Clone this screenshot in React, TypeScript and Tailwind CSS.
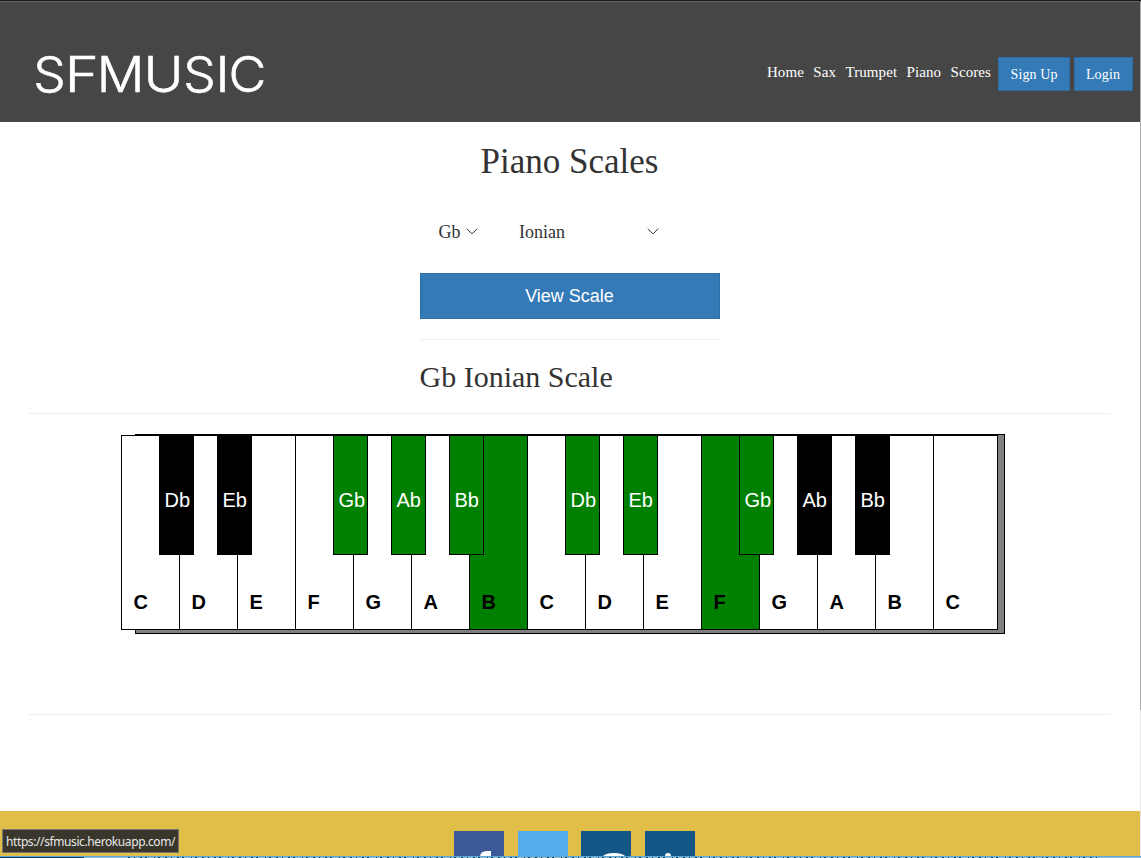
const whiteKeys = ["C", "D", "E", "F", "G", "A", "B", "C", "D", "E", "F", "G", "A", "B", "C"];
const litWhite = [6, 10];
const blackKeys = [
  { at: 0, note: "Db", lit: false },
  { at: 1, note: "Eb", lit: false },
  { at: 3, note: "Gb", lit: true },
  { at: 4, note: "Ab", lit: true },
  { at: 5, note: "Bb", lit: true },
  { at: 7, note: "Db", lit: true },
  { at: 8, note: "Eb", lit: true },
  { at: 10, note: "Gb", lit: true },
  { at: 11, note: "Ab", lit: false },
  { at: 12, note: "Bb", lit: false },
];

const logoLetters = [
  { ch: "S", x: -1.8, sx: 1.05 },
  { ch: "F", x: 29.8, sx: 1.18 },
  { ch: "M", x: 61.8, sx: 1.08 },
  { ch: "U", x: 108.8, sx: 1.1 },
  { ch: "S", x: 148.2, sx: 1.05 },
  { ch: "I", x: 180.6, sx: 1.1 },
  { ch: "C", x: 193.6, sx: 1.06 },
];

function Header() {
  return (
    <header className="flex h-[122px] shrink-0 justify-between border-t border-[#19191c] bg-[#464646] pr-[8px] pl-[35px] text-white shadow-[inset_0_1px_0_#606060]">
      <svg className="mt-[43px] block h-[60px] w-[240px] overflow-visible" aria-label="SFMUSIC">
        <g fill="white" stroke="white" strokeWidth="0.6" fontSize="49" fontWeight="300" fontFamily="Inter, sans-serif">
          {logoLetters.map((l) => (
            <text key={l.x} transform={`translate(${l.x} 47.8) scale(${l.sx} 1)`}>
              {l.ch}
            </text>
          ))}
        </g>
      </svg>
      <nav className="mt-[56px] flex items-start text-[14px] leading-5">
        <div className="mt-[5px] mr-[7px] flex gap-[9.4px] text-[15px] tracking-[0.08px]">
          <a>Home</a>
          <a>Sax</a>
          <a>Trumpet</a>
          <a>Piano</a>
          <a>Scores</a>
        </div>
        <button className="mr-1 h-[34px] w-[72px] border border-[#2e6da4] bg-[#337ab7] pt-px tracking-[0.1px]">Sign Up</button>
        <button className="h-[34px] w-[59px] border border-[#2e6da4] bg-[#337ab7] pt-px pr-px tracking-[0.15px]">Login</button>
      </nav>
    </header>
  );
}

function Chevron() {
  return (
    <svg className="-mt-px h-[7px] w-[12px]" viewBox="0 0 12 7" fill="none" stroke="#333" strokeWidth="1">
      <path d="M.8.7 6 5.9 11.2.7" />
    </svg>
  );
}

function Piano() {
  return (
    <div className="relative mt-5 ml-[121px] h-[200px] w-[884px] font-['Liberation_Sans',sans-serif] text-[20px] leading-7 text-black">
      <div className="absolute inset-y-0 right-0 left-[14px] border border-black bg-[#808080]" />
      <div className="absolute top-px left-0 flex h-[195px] w-[877px] border border-black">
        {whiteKeys.map((note, i) => (
          <div
            key={i}
            className={`flex items-end pb-[13px] pl-[11.5px] font-bold ${i === 14 ? "flex-1" : "w-[58px] border-r border-black"} ${litWhite.includes(i) ? "bg-[#008000]" : "bg-white"}`}
          >
            {note}
          </div>
        ))}
      </div>
      {blackKeys.map((k) => (
        <div
          key={k.at}
          style={{ left: 38 + k.at * 58 }}
          className={`absolute top-px h-[120px] w-[35px] border border-black pt-[50px] pl-[4.5px] text-white ${k.lit ? "bg-[#008000]" : "bg-black"}`}
        >
          {k.note}
        </div>
      ))}
    </div>
  );
}

export default function App() {
  return (
    <div className="relative flex h-[858px] w-[1141px] flex-col overflow-hidden bg-white font-['Liberation_Serif',serif] text-[#333]">
      <Header />
      <main className="h-[689px] shrink-0">
        <h1 className="w-[1139px] pt-5 text-center text-[35px] leading-10">Piano Scales</h1>
        <div className="mx-auto mr-[421px] w-[300px]">
          <div className="mt-[38px] flex h-[24px] items-center pl-[18.5px] text-[18px]">
            <span className="w-[27.5px]">Gb</span>
            <Chevron />
            <span className="ml-[41px] w-[127.5px]">Ionian</span>
            <Chevron />
          </div>
          <button className="mt-[29px] h-[46px] w-full border border-[#2e6da4] bg-[#337ab7] pr-px font-['Liberation_Sans',sans-serif] text-[18px] text-white">
            View Scale
          </button>
          <div className="mt-5 border-t border-[#eee]" />
          <h2 className="-ml-[0.5px] mt-5 text-[30px] leading-[33px]">Gb Ionian Scale</h2>
        </div>
        <div className="mt-5 mr-[31px] ml-[29px] border-t border-[#eee]" />
        <Piano />
        <div className="mt-20 mr-[31px] ml-[29px] border-t border-[#eee]" />
      </main>
      <footer className="flex flex-1 gap-[14px] bg-[#e0be48] pt-5 pl-[454px]">
        <div className="h-[50px] w-[50px] bg-[#3b5998]">
          <svg className="mt-5 ml-[25px] h-[30px] w-[12px]" viewBox="0 0 12 30" fill="white">
            <path d="M1 8V6Q1 0 8 0h4v6H9q-2 0-2 2Z" />
          </svg>
        </div>
        <div className="h-[50px] w-[50px] bg-[#55acee]">
          <svg className="mt-6 ml-[36px] h-[4px] w-[6px]" viewBox="0 0 6 4" fill="white">
            <path d="M0 2q3-2 6 0v2H0Z" opacity="0.6" />
          </svg>
        </div>
        <div className="-ml-px h-[50px] w-[50px] bg-[#125688]">
          <svg className="mt-[22px] ml-[21px] h-[9px] w-[24px]" viewBox="0 0 24 9" fill="white">
            <path d="M0 4q3-4 12-4t12 4Z" />
          </svg>
        </div>
        <div className="h-[50px] w-[50px] bg-[#125688]">
          <svg className="mt-[22px] ml-[20px] h-[6px] w-[6px]" viewBox="0 0 6 6" fill="white">
            <circle cx="3" cy="3" r="3" />
          </svg>
        </div>
      </footer>
      <svg className="absolute bottom-0 left-0 h-[2px] w-[1141px]" viewBox="0 0 1141 2" shapeRendering="crispEdges" aria-hidden="true">
        <rect width="1141" height="1" fill="#4baee1" />
        <rect y="1" width="1141" height="1" fill="#a9b8bf" />
        <rect y="1" width="84" height="1" fill="#292940" />
        <path d="M128 1.5H1100" stroke="#17354a" strokeDasharray="2 4 1 5 2 3 2 7 1 3 2 5" />
      </svg>
      <div className="absolute top-[2px] right-0 h-[708px] w-px bg-[#adadad]" />
      <div className="absolute top-[710px] right-0 h-[146px] w-px bg-[#e8e8e8]" />
      <div className="absolute top-[829px] left-[2px] h-6 w-[177px] border border-[#777770] bg-[#39372b] pl-[3px] font-['Noto_Sans',sans-serif] text-[12px] leading-[23px] tracking-[-0.4px] whitespace-nowrap text-[#e8e8e8]">
        https://sfmusic.herokuapp.com/
      </div>
    </div>
  );
}
